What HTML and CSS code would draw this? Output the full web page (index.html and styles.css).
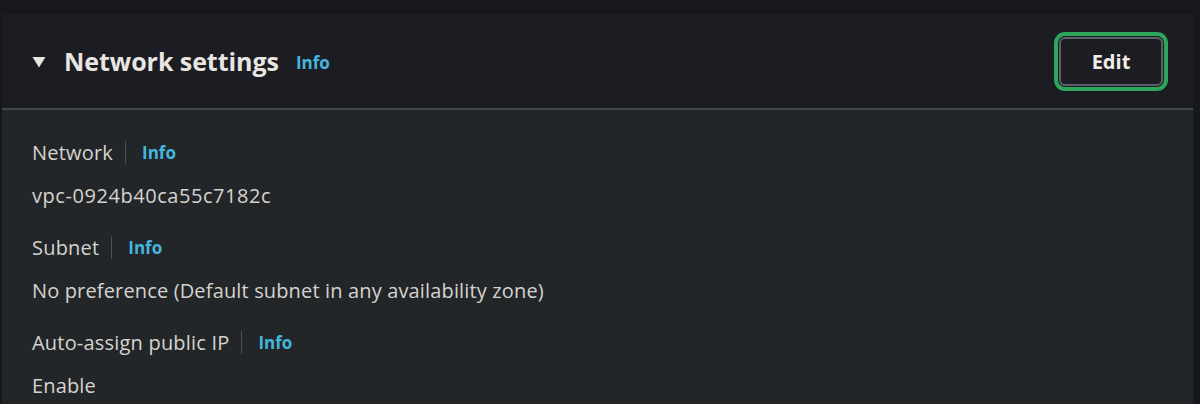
FILE: index.html
```html
<!DOCTYPE html>
<html>
<head>
<meta charset="utf-8">
<link rel="stylesheet" href="styles.css">
</head>
<body>
<div class="page">
  <section class="panel">
    <header class="panel-header">
      <div class="title-group">
        <svg class="caret" width="14" height="12" viewBox="0 0 14 12"><path d="M0.5 1 L13.5 1 L7 11.5 Z" fill="#e9e6e2"/></svg>
        <h2 class="title">Network settings</h2>
        <a class="info info-lg">Info</a>
      </div>
      <div class="edit-ring"><button class="edit-btn">Edit</button></div>
    </header>
    <div class="panel-body">
      <div class="field">
        <div class="label"><span class="label-text">Network</span><span class="divider"></span><a class="info">Info</a></div>
        <div class="value mono-ish">vpc-0924b40ca55c7182c</div>
      </div>
      <div class="field">
        <div class="label"><span class="label-text">Subnet</span><span class="divider"></span><a class="info">Info</a></div>
        <div class="value">No preference (Default subnet in any availability zone)</div>
      </div>
      <div class="field">
        <div class="label"><span class="label-text">Auto-assign public IP</span><span class="divider"></span><a class="info">Info</a></div>
        <div class="value">Enable</div>
      </div>
    </div>
  </section>
</div>
</body>
</html>
```
FILE: styles.css
```css
html, body {
  margin: 0;
  padding: 0;
  background: #16181d;
  font-family: "Open Sans", "Noto Sans", sans-serif;
  height: 404px;
  overflow: hidden;
}
.page {
  padding: 14px 7px 0 2px;
}
.panel {
  background: #232629;
  height: 390px;
}
.panel-header {
  background: #1b1d22;
  height: 96px;
  border-bottom: 2px solid #3f454c;
  box-sizing: border-box;
  display: flex;
  align-items: center;
  justify-content: space-between;
  padding: 0 25px 0 30px;
}
.title-group {
  display: flex;
  align-items: center;
}
.caret {
  margin-right: 18px;
  margin-top: 2px;
}
.title {
  margin: 0;
  font-size: 25px;
  font-weight: 700;
  color: #e9e6e2;
  letter-spacing: -0.05px;
}
.info {
  color: #46b5dc;
  font-weight: 700;
  font-size: 17px;
}
.info-lg {
  margin-left: 17px;
  margin-top: 3px;
}
.edit-ring {
  border: 4px solid #2ea55a;
  border-radius: 11px;
  padding: 1px;
  display: flex;
}
.edit-btn {
  width: 104px;
  height: 49px;
  background: #1b1d22;
  border: 2px solid #5a616b;
  border-radius: 6px;
  color: #efece8;
  font-family: "Open Sans", "Noto Sans", sans-serif;
  font-weight: 700;
  font-size: 20px;
  padding: 0;
}
.panel-body {
  padding: 27px 30px 0 30px;
}
.label {
  display: flex;
  align-items: center;
  height: 30px;
}
.label-text {
  color: #d5d3cf;
  font-size: 20px;
  letter-spacing: 0.2px;
}
.divider {
  width: 1px;
  height: 23px;
  background: #4b5058;
  margin: 0 16px 0 12px;
}
.value {
  color: #d5d3cf;
  font-size: 20px;
  letter-spacing: 0.15px;
  height: 30px;
  line-height: 30px;
  margin-top: 14px;
  margin-bottom: 21px;
}
.mono-ish {
  letter-spacing: 0.55px;
}
```
